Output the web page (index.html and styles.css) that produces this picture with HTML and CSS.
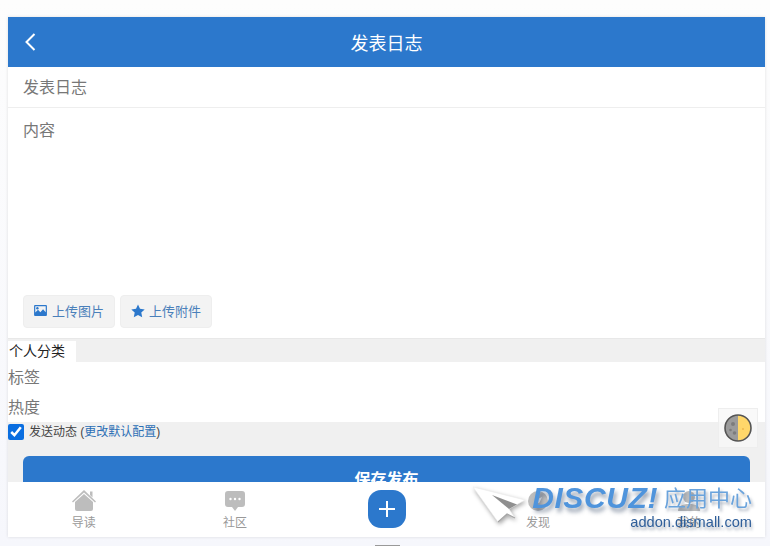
FILE: index.html
```html
<!DOCTYPE html>
<html lang="zh">

<head>
    <meta charset="UTF-8">
    <meta name="viewport" content="width=device-width, initial-scale=1.0">
    <title>发表日志</title>
    <link rel="stylesheet" href="styles.css">
</head>

<body>
    <div class="main-wrapper">
        <header class="top-bar">
            <svg class="back-icon" width="12" height="20" viewBox="0 0 12 20"><path d="M10.5 2 L2.5 10 L10.5 18" fill="none" stroke="#fff" stroke-width="2"/></svg>
            <span>发表日志</span>
        </header>

        <div class="subject-row">发表日志</div>

        <div class="content-box">
            <div class="content-text">内容</div>
            <div class="upload-group">
                <button class="upload-button">
                    <svg width="13" height="11" viewBox="0 0 14 12"><path fill="#2c78cc" d="M1 0h12a1 1 0 0 1 1 1v10a1 1 0 0 1-1 1H1a1 1 0 0 1-1-1V1a1 1 0 0 1 1-1zm.3 1.3v7l3-3 2.5 2.5 3-3.3 2.9 3.3V1.3z"/><circle cx="3.6" cy="3.6" r="1.3" fill="#2c78cc"/></svg>
                    上传图片
                </button>
                <button class="upload-button upload-button-star">
                    <svg width="14" height="14" viewBox="0 0 14 14"><path fill="#2c78cc" d="M7 .5l2 4.3 4.7.6-3.4 3.2.9 4.7L7 11l-4.2 2.3.9-4.7L.3 5.4 5 4.8z"/></svg>
                    上传附件
                </button>
            </div>
        </div>

        <div class="tab-strip"><span class="tab-item">个人分类</span></div>
        <div class="field-row">标签</div>
        <div class="field-row">热度</div>

        <div class="options-area">
            <label class="feed-option">
                <input type="checkbox" checked>
                <span>发送动态 (<a href="#">更改默认配置</a>)</span>
            </label>
            <button class="save-button">保存发布</button>
        </div>
    </div>

    <nav class="tab-bar">
        <div class="tab-link">
            <svg width="24" height="21" viewBox="0 0 24 21"><path fill="#bdbdbd" d="M18 1.5h2.5v6L18 5z"/><path fill="#bdbdbd" d="M12 0 L24 11.5 L23 12.5 L12 2.5 L1 12.5 L0 11.5 Z"/><path fill="#bdbdbd" d="M12 4 L21 12 V19 a2 2 0 0 1-2 2 H5 a2 2 0 0 1-2-2 V12 Z"/></svg>
            <span>导读</span>
        </div>
        <div class="tab-link">
            <svg width="20" height="20" viewBox="0 0 20 20"><path fill="#bdbdbd" d="M3 0h14a3 3 0 0 1 3 3v10a3 3 0 0 1-3 3h-4l-3 4-3-4H3a3 3 0 0 1-3-3V3a3 3 0 0 1 3-3z"/><circle cx="5.5" cy="8" r="1.2" fill="#fff"/><circle cx="10" cy="8" r="1.2" fill="#fff"/><circle cx="14.5" cy="8" r="1.2" fill="#fff"/></svg>
            <span>社区</span>
        </div>
        <div class="tab-link">
            <div class="plus-button">
                <svg width="16" height="16" viewBox="0 0 16 16"><path d="M8 0v16M0 8h16" stroke="#fff" stroke-width="2"/></svg>
            </div>
        </div>
        <div class="tab-link">
            <svg width="20" height="20" viewBox="0 0 20 20"><circle cx="10" cy="10" r="10" fill="#bdbdbd"/><path d="M14 6l-2.5 5.5L6 14l2.5-5.5z" fill="#fff"/></svg>
            <span>发现</span>
        </div>
        <div class="tab-link">
            <svg width="22" height="20" viewBox="0 0 22 20"><circle cx="11" cy="6" r="6" fill="#bdbdbd"/><path fill="#bdbdbd" d="M0 20c0-5 4-7 11-7s11 2 11 7z"/></svg>
            <span>我的</span>
        </div>
    </nav>

    <div class="night-toggle">
        <svg width="28" height="28" viewBox="0 0 28 28">
            <circle cx="14" cy="14" r="13" fill="#ffd76a"/>
            <path d="M14 1a13 13 0 0 0 0 26z" fill="#9b9b9b"/>
            <circle cx="9" cy="10" r="2" fill="#7c7c7c"/>
            <circle cx="6.5" cy="16" r="1.3" fill="#7c7c7c"/>
            <circle cx="10.5" cy="19" r="1.8" fill="#7c7c7c"/>
            <circle cx="19" cy="15" r="1" fill="#efb94c"/>
            <circle cx="14" cy="14" r="13" fill="none" stroke="#555" stroke-width="1.6"/>
        </svg>
    </div>

    <div class="watermark">
        <svg class="watermark-plane" width="54" height="40" viewBox="0 0 54 40">
            <path d="M0 2 L52 15 L36 24 L42 33 L34 29 L25 37 Z" fill="#fff" stroke="#ececec" stroke-width=".6"/>
            <path d="M19 10 L44 19.5 L36 24 Z" fill="#8f8f8f"/>
            <path d="M25 37 L34 29 L42 33" fill="none" stroke="#a5a5a5" stroke-width="1.2"/>
        </svg>
        <div class="watermark-text">
            <div class="watermark-top"><span class="watermark-logo">DISCUZ!</span><span class="watermark-cn">应用中心</span></div>
            <div class="watermark-url">addon.dismall.com</div>
        </div>
    </div>

    <div class="page-tick"></div>
</body>

</html>
```
FILE: styles.css
```css
html, body {
    height: 100%;
}

body {
    font-family: "Liberation Sans", "Noto Sans CJK SC", sans-serif;
    background: linear-gradient(to bottom, #fdfdfd, #f6f7fc);
    margin: 0;
    padding: 17px 5px 0 8px;
    box-sizing: border-box;
    overflow: hidden;
    color: #777;
}

.main-wrapper {
    background-color: #fff;
    box-shadow: 0 0 3px rgba(0, 0, 0, 0.12);
}

.top-bar {
    height: 50px;
    background-color: #2c78cc;
    color: #fff;
    font-size: 18px;
    display: flex;
    align-items: center;
    justify-content: center;
    position: relative;
}

.back-icon {
    position: absolute;
    left: 16px;
    top: 15px;
}

.subject-row {
    height: 40px;
    line-height: 41px;
    padding: 0 15px;
    font-size: 16px;
    border-bottom: 1px solid #eee;
}

.content-box {
    height: 230px;
    padding: 15px 15px 10px;
    box-sizing: border-box;
    display: flex;
    flex-direction: column;
    justify-content: space-between;
    font-size: 16px;
}

.content-text {
    line-height: 16px;
}

.upload-group {
    display: flex;
    gap: 5px;
}

.upload-button {
    height: 33px;
    width: 92px;
    padding: 0 0 2px;
    border: 1px solid #eee;
    border-radius: 4px;
    background-color: #f3f3f3;
    color: #4a80ba;
    font-family: inherit;
    font-size: 13px;
    display: flex;
    align-items: center;
    justify-content: center;
    gap: 5px;
}

.upload-button-star {
    gap: 4px;
}

.tab-strip {
    height: 24px;
    padding-top: 2px;
    box-sizing: border-box;
    background-color: #f0f0f0;
    border-top: 1px solid #e8e8e8;
    display: flex;
}

.tab-item {
    width: 67px;
    padding-left: 1px;
    background-color: #fff;
    color: #222;
    font-size: 14px;
    line-height: 20px;
}

.field-row {
    height: 30px;
    line-height: 32px;
    font-size: 16px;
}

.options-area {
    background-color: #f0f0f0;
    padding: 0 15px;
    height: 115px;
    overflow: hidden;
}

.feed-option {
    display: flex;
    align-items: center;
    height: 20px;
    margin-left: -15px;
    font-size: 12px;
    color: #444;
}

.feed-option input {
    width: 16px;
    height: 16px;
    margin: 0 5px 0 0;
    accent-color: #0a6ee0;
}

.feed-option span {
    padding-bottom: 4px;
}

.feed-option a {
    color: #2c6fb5;
    text-decoration: none;
}

.save-button {
    display: block;
    width: 100%;
    height: 44px;
    margin-top: 14px;
    padding: 0;
    border: none;
    border-radius: 6px;
    background-color: #2c78cc;
    color: #fff;
    font-family: inherit;
    font-size: 16px;
    font-weight: bold;
}

/* bottom bar stays fixed over the form */
.tab-bar {
    position: fixed;
    left: 8px;
    right: 5px;
    top: 482px;
    height: 55px;
    padding-top: 1px;
    box-sizing: border-box;
    background-color: #fff;
    display: flex;
}

.tab-link {
    flex: 1;
    display: flex;
    flex-direction: column;
    align-items: center;
    justify-content: center;
    gap: 2px;
    font-size: 12px;
    color: #999;
}

.plus-button {
    width: 38px;
    height: 38px;
    margin-bottom: 2px;
    border-radius: 13px;
    background-color: #2c78cc;
    display: flex;
    align-items: center;
    justify-content: center;
}

.night-toggle {
    position: fixed;
    left: 718px;
    top: 408px;
    width: 38px;
    height: 38px;
    border: 1px solid #eee;
    background-color: rgba(248, 248, 248, 0.8);
    display: flex;
    align-items: center;
    justify-content: center;
}

.watermark {
    position: fixed;
    left: 473px;
    top: 485px;
    width: 279px;
    display: flex;
}

.watermark-plane {
    flex: none;
    filter: drop-shadow(1px 2px 2px rgba(0, 0, 0, 0.35));
}

.watermark-text {
    flex: 1;
    text-align: right;
}

.watermark-top {
    display: flex;
    align-items: center;
    justify-content: flex-end;
    height: 27px;
    white-space: nowrap;
}

.watermark-logo {
    padding-bottom: 2px;
    font-size: 30px;
    font-weight: bold;
    font-style: italic;
    letter-spacing: 0.6px;
    color: #4f94dc;
    text-shadow: 2px 4px 4px rgba(50, 70, 100, 0.5);
}

.watermark-cn {
    margin-left: 6px;
    padding-bottom: 5px;
    font-size: 22px;
    color: #6aa3dc;
    text-shadow: 2px 3px 3px rgba(50, 70, 100, 0.4);
}

.watermark-url {
    font-size: 14.6px;
    line-height: 20px;
    color: #2f5f9a;
    text-shadow: 1px 3px 3px rgba(50, 70, 100, 0.45);
}

.page-tick {
    position: fixed;
    left: 375px;
    top: 545px;
    width: 25px;
    height: 1px;
    background-color: #999;
}
```
